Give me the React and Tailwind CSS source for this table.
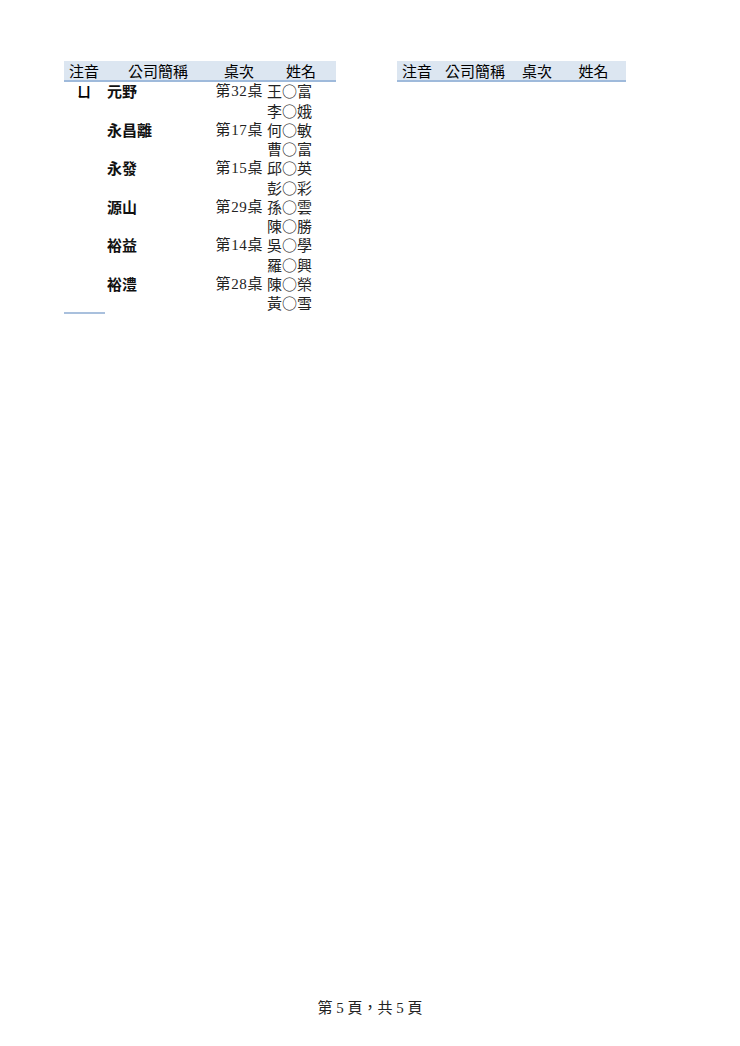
import React from 'react';

// 第5頁的座位資料（ㄩ 開頭）
const GROUPS = [
  { zhuyin: 'ㄩ', company: '元野', table: '第32桌', names: ['王○富', '李○娥'] },
  { zhuyin: '', company: '永昌離', table: '第17桌', names: ['何○敏', '曹○富'] },
  { zhuyin: '', company: '永發', table: '第15桌', names: ['邱○英', '彭○彩'] },
  { zhuyin: '', company: '源山', table: '第29桌', names: ['孫○雲', '陳○勝'] },
  { zhuyin: '', company: '裕益', table: '第14桌', names: ['吳○學', '羅○興'] },
  { zhuyin: '', company: '裕澧', table: '第28桌', names: ['陳○榮', '黃○雪'] },
];

const SANS = "font-['Noto_Sans_CJK_TC','Liberation_Sans',sans-serif]";
const SERIF = "font-['Liberation_Serif','Noto_Sans_CJK_TC',serif]";

const LeftTable = () => (
  <div className="w-[272px]">
    <div className={`flex h-[21px] bg-[#dce6f1] border-b-2 border-[#9fbadb] text-[15px] leading-[19px] text-black ${SANS}`}>
      <div className="w-[40px] text-center">注音</div>
      <div className="w-[108px] text-center">公司簡稱</div>
      <div className="w-[54px] text-center">桌次</div>
      <div className="w-[70px] text-center">姓名</div>
    </div>
    {GROUPS.map((g) =>
      g.names.map((n, i) => (
        <div key={n} className="flex h-[19.25px] items-center">
          <div className={`w-[40px] text-center text-[14px] font-bold ${SANS}`}>{i === 0 ? g.zhuyin : ''}</div>
          <div className={`w-[108px] pl-[3px] text-[15px] font-bold text-[#111] ${SANS}`}>{i === 0 ? g.company : ''}</div>
          <div className={`w-[54px] pr-[3px] text-right text-[15px] tracking-[0.6px] text-[#222] ${SERIF}`}>{i === 0 ? g.table : ''}</div>
          <div className={`w-[70px] pl-[1px] text-[15px] text-[#222] ${SANS}`}>{n}</div>
        </div>
      ))
    )}
    <div className="w-[41px] h-[2px] bg-[#a9c0dd] -mt-[1px]" />
  </div>
);

const RightTable = () => (
  <div className="w-[229px]">
    <div className={`flex h-[21px] bg-[#dce6f1] border-b-2 border-[#9fbadb] text-[15px] leading-[19px] text-black ${SANS}`}>
      <div className="w-[40px] text-center">注音</div>
      <div className="w-[76px] text-center">公司簡稱</div>
      <div className="w-[48px] text-center">桌次</div>
      <div className="w-[65px] text-center">姓名</div>
    </div>
  </div>
);

const App = () => {
  return (
    <div lang="zh-Hant" className="w-[740px] h-[1046px] bg-white flex flex-col">
      <div className="flex pt-[61px] pl-[64px] gap-[61px]">
        <LeftTable />
        <RightTable />
      </div>
      <div className={`mt-auto pb-[28px] text-center text-[15px] leading-[20px] text-[#222] ${SERIF}`}>
        第 5 頁，共 5 頁
      </div>
    </div>
  );
};

export default App;
